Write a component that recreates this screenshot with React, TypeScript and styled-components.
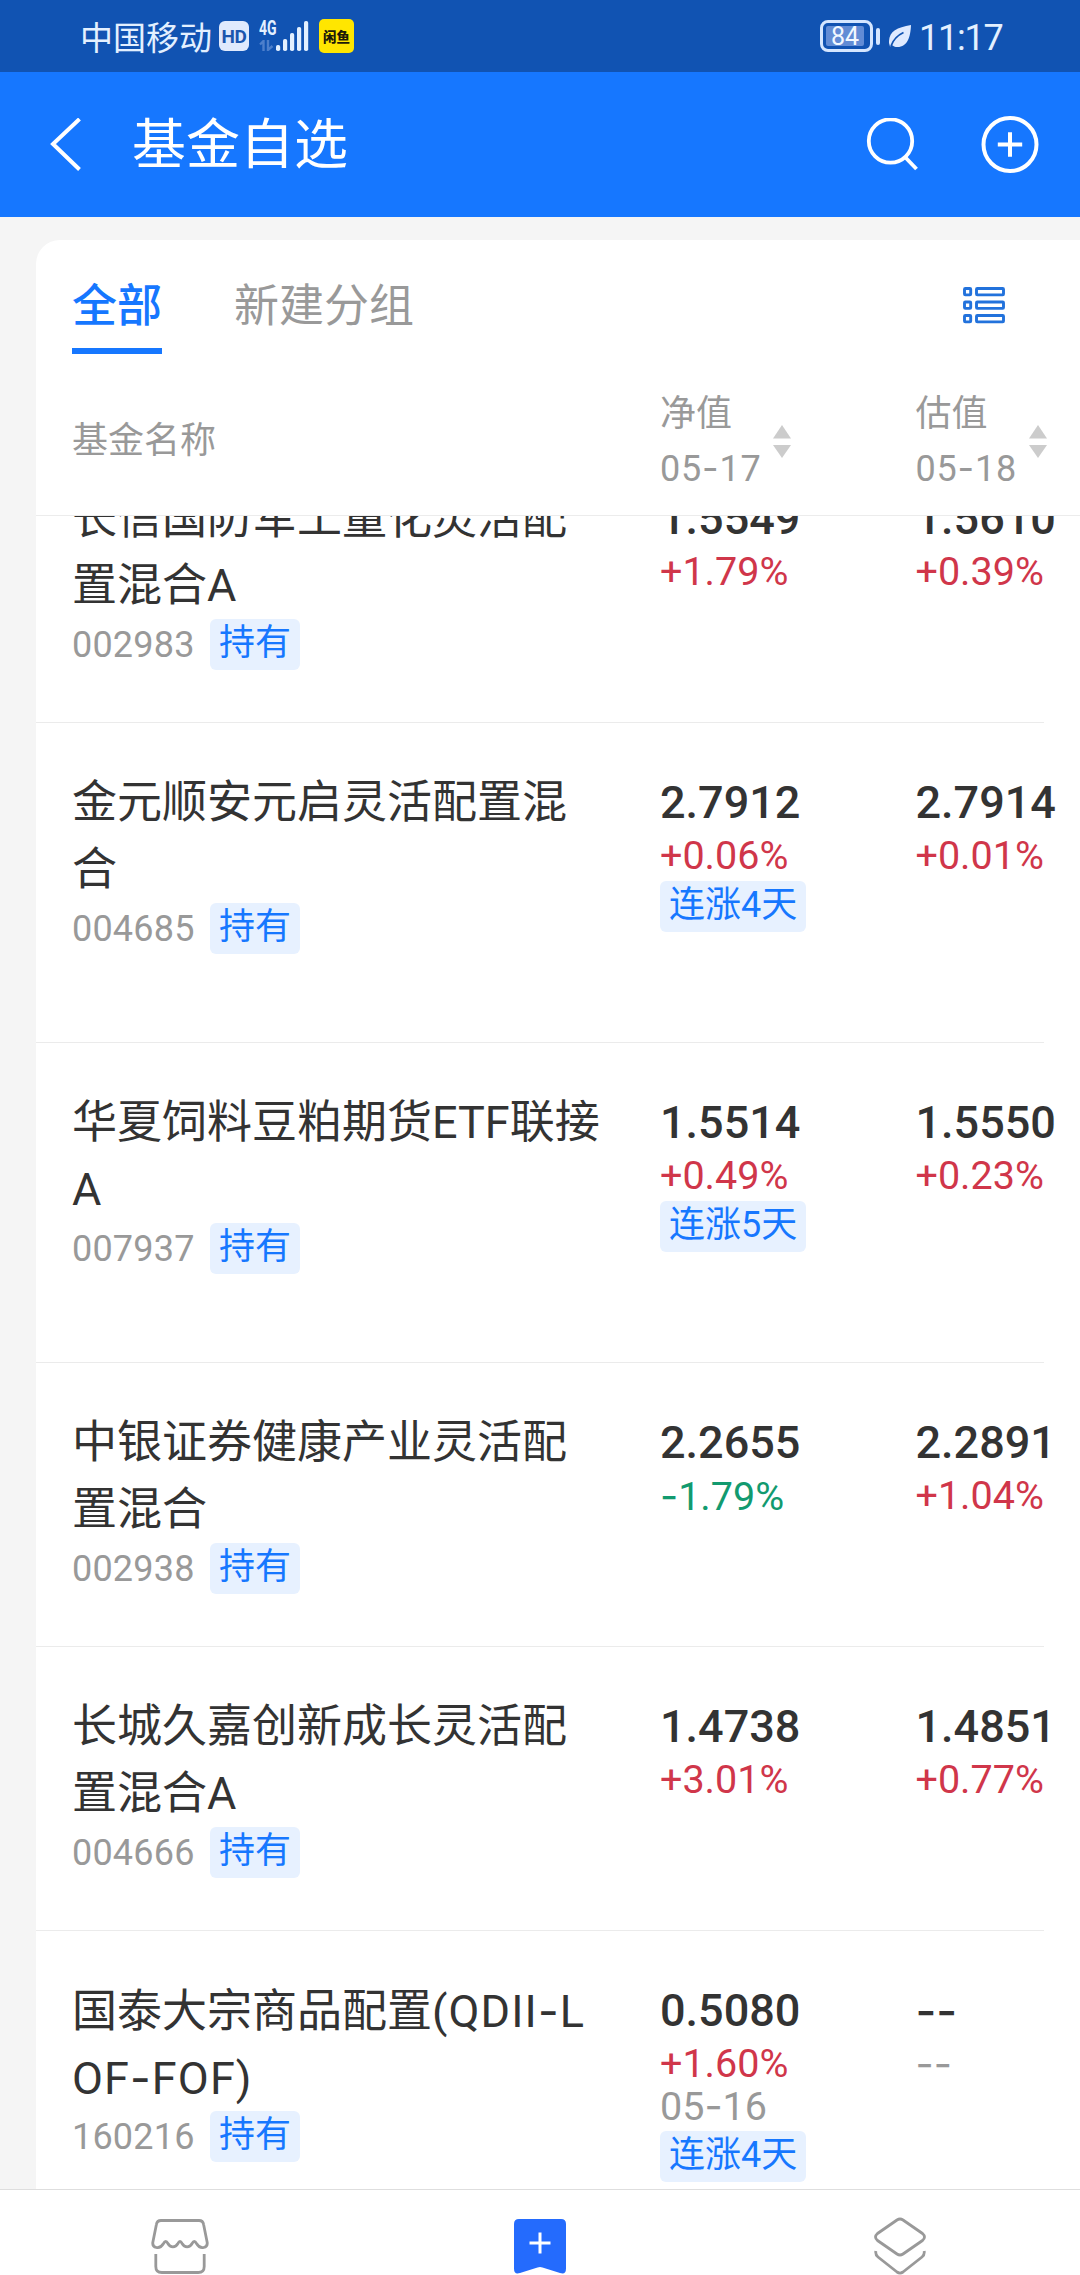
import React from "react";
import styled, { createGlobalStyle, css } from "styled-components";

const latin = `Roboto, "Noto Sans CJK SC", sans-serif`;
const cjk = `"Noto Sans CJK SC", sans-serif`;

const Global = createGlobalStyle`
  * { box-sizing: border-box; }
  body { margin: 0; background: #f5f5f5; font-family: ${latin}; color: #333; }
`;

const Screen = styled.div`
  width: 1080px;
  height: 2275px;
  display: flex;
  flex-direction: column;
  overflow: hidden;
  background: #f5f5f5;
`;

/* ---------- system status bar ---------- */

const StatusBar = styled.div`
  height: 72px;
  flex: none;
  display: flex;
  align-items: center;
  padding: 0 78px 0 80px;
  background: #1153b2;
  color: #e3f0ff;
`;

const Carrier = styled.span`
  font: 400 33px/36px ${cjk};
  width: 139px;
`;

const HdBadge = styled.span`
  width: 30px;
  height: 30px;
  border-radius: 6px;
  background: #e0eafd;
  color: #1b56ae;
  font: 700 19px/31px Roboto, sans-serif;
  letter-spacing: -0.5px;
  text-align: center;
  margin-right: 10px;
`;

const Network = styled.div`
  display: flex;
  align-items: flex-end;
  height: 30px;
  width: 60px;
`;

const NetworkType = styled.div`
  width: 17px;
  height: 30px;
  display: flex;
  flex-direction: column;
  justify-content: space-between;
  font: 700 20px/14px Roboto, sans-serif;
`;

const NetworkLabel = styled.span`
  display: block;
  transform: scaleX(0.7);
  transform-origin: left;
`;

const AppBadge = styled.span`
  width: 35px;
  height: 34px;
  border-radius: 5px;
  background: #ffe600;
  color: #1c1a08;
  font: 900 13.5px/34px ${cjk};
  text-align: center;
`;

const Spacer = styled.div`
  flex: 1;
`;

const Battery = styled.div`
  width: 53px;
  height: 32px;
  border: 3px solid #d5e6ff;
  border-radius: 8px;
  padding: 3px;
`;

const BatteryLevel = styled.div`
  width: 38px;
  height: 20px;
  border-radius: 2px;
  background: #628cd5;
  color: #f2f8ff;
  font: 400 25px/21px Roboto, sans-serif;
  text-align: center;
`;

const BatteryTip = styled.div`
  width: 4px;
  height: 17px;
  border-radius: 2px;
  background: #d5e6ff;
  margin: 0 9px 0 3px;
`;

const Clock = styled.span`
  font: 400 36px/40px Roboto, sans-serif;
  letter-spacing: -1.2px;
  width: 83px;
  margin-left: 8px;
  padding-top: 4px;
  white-space: nowrap;
`;

/* ---------- title bar ---------- */

const TitleBar = styled.header`
  height: 145px;
  flex: none;
  display: flex;
  align-items: center;
  padding: 0 41px 0 49px;
  background: #1677ff;
`;

const Title = styled.h1`
  margin: 0 0 7px 49px;
  flex: 1;
  color: #fff;
  font: 400 54px/60px ${cjk};
`;

const IconButton = styled.button`
  border: 0;
  padding: 0;
  background: none;
  display: flex;
  margin-left: ${(p: { $gap?: number }) => p.$gap ?? 0}px;
`;

/* ---------- card ---------- */

const Card = styled.main`
  flex: 1;
  min-height: 0;
  margin: 23px 0 0 36px;
  border-top-left-radius: 24px;
  background: #fff;
  display: flex;
  flex-direction: column;
`;

const Tabs = styled.nav`
  height: 114px;
  flex: none;
  display: flex;
  align-items: flex-end;
  padding: 0 75px 0 36px;
  gap: 72px;
`;

const Tab = styled.span<{ $active?: boolean }>`
  font: ${(p) => (p.$active ? 500 : 400)} 45px/57px ${cjk};
  color: ${(p) => (p.$active ? "#1677ff" : "#999")};
  height: 80px;
  border-bottom: 6px solid ${(p) => (p.$active ? "#1677ff" : "transparent")};
`;

const ListToggle = styled(IconButton)`
  margin: 0 0 30px auto;
`;

const columns = css`
  display: grid;
  grid-template-columns: 588px 255.5px 1fr;
  padding-left: 36px;
`;

const TableHead = styled.div`
  ${columns}
  flex: none;
  height: 162px;
  align-items: center;
  border-bottom: 1px solid #ececec;
  color: #999;
  font: 400 36px/52px ${latin};
  padding-top: 13px;
`;

const HeadCell = styled.div`
  display: flex;
  align-items: center;
`;

const HeadText = styled.div`
  width: 113px;
  white-space: nowrap;
`;

const HeadDate = styled.div`
  letter-spacing: 0.8px;
  padding-top: 2px;
`;

const List = styled.section`
  flex: 1;
  min-height: 0;
  overflow: hidden;
`;

const Rows = styled.div`
  margin-top: -77px;
`;

const Row = styled.article<{ $tall: boolean }>`
  ${columns}
  height: ${(p) => (p.$tall ? 320 : 284)}px;
  padding-top: 44px;
  width: 1008px;
  border-bottom: 1px solid #ebebeb;
`;

const Name = styled.div`
  font: 400 45px/67px ${latin};
  height: 67px;
  padding-top: 2px;
  white-space: nowrap;
  color: #333;
`;

const Tracked = styled.span`
  letter-spacing: 1.1px;
`;

const CodeLine = styled.div`
  display: flex;
  align-items: center;
  padding-top: 1px;
`;

const Code = styled.span`
  font: 400 36px/51px Roboto, sans-serif;
  letter-spacing: 0.2px;
  color: #999;
  width: 138px;
  padding-top: 2px;
`;

const Tag = styled.span`
  display: inline-block;
  height: 51px;
  padding: 0 9px;
  border-radius: 6px;
  background: #e7f1ff;
  color: #1677ff;
  font: 400 36px/49px ${latin};
  white-space: nowrap;
`;

const Quote = styled.div`
  display: flex;
  flex-direction: column;
  align-items: flex-start;
  white-space: nowrap;
`;

const Value = styled.div`
  font: 500 45px/67px Roboto, sans-serif;
  height: 68px;
  padding-top: 2px;
  color: #333;
`;

const tones = { up: "#d0364a", down: "#129a6f", flat: "#999" };

const Change = styled.div<{ $tone: keyof typeof tones }>`
  font: 400 39.5px/42px Roboto, sans-serif;
  height: 42px;
  color: ${(p) => tones[p.$tone]};
`;

const Streak = styled(Tag)`
  margin-top: 4px;
`;

const Dash = styled.span`
  font-family: Inter, sans-serif;
`;

/* ---------- bottom bar ---------- */

const BottomBar = styled.footer`
  height: 86px;
  flex: none;
  display: grid;
  grid-template-columns: repeat(3, 1fr);
  justify-items: center;
  align-items: start;
  padding-top: 26px;
  border-top: 1px solid #dedede;
  background: #fff;
`;

/* Hyphens use a wider glyph than the digits' own font provides. */
const Dashed = ({ text }: { text: string }) => (
  <>
    {text.split(/(-)/).map((part, i) => (part === "-" ? <Dash key={i}>-</Dash> : part))}
  </>
);

/* Long Latin abbreviations inside a fund name are set slightly looser. */
const FundName = ({ text }: { text: string }) => (
  <Name>
    {text.split(/(\(?[A-Z-]{4,}\)?)/).map((part, i) =>
      i % 2 ? <Tracked key={i}><Dashed text={part} /></Tracked> : part
    )}
  </Name>
);

const SortArrows = () => (
  <svg width="18" height="33" viewBox="0 0 18 33" fill="#ccc">
    <path d="M9 0L18 13.5H0z" />
    <path d="M0 20h18L9 33z" />
  </svg>
);

type QuoteData = { value: string; change: string; date?: string; streak?: string };
type Fund = { name: string[]; code: string; net: QuoteData; est: QuoteData; tall?: boolean };

const funds: Fund[] = [
  { name: ["长信国防军工量化灵活配", "置混合A"], code: "002983", net: { value: "1.5549", change: "+1.79%" }, est: { value: "1.5610", change: "+0.39%" } },
  { name: ["金元顺安元启灵活配置混", "合"], code: "004685", net: { value: "2.7912", change: "+0.06%", streak: "连涨4天" }, est: { value: "2.7914", change: "+0.01%" }, tall: true },
  { name: ["华夏饲料豆粕期货ETF联接", "A"], code: "007937", net: { value: "1.5514", change: "+0.49%", streak: "连涨5天" }, est: { value: "1.5550", change: "+0.23%" }, tall: true },
  { name: ["中银证券健康产业灵活配", "置混合"], code: "002938", net: { value: "2.2655", change: "-1.79%" }, est: { value: "2.2891", change: "+1.04%" } },
  { name: ["长城久嘉创新成长灵活配", "置混合A"], code: "004666", net: { value: "1.4738", change: "+3.01%" }, est: { value: "1.4851", change: "+0.77%" } },
  { name: ["国泰大宗商品配置(QDII-L", "OF-FOF)"], code: "160216", net: { value: "0.5080", change: "+1.60%", date: "05-16", streak: "连涨4天" }, est: { value: "--", change: "--" }, tall: true },
];

const toneOf = (change: string): keyof typeof tones =>
  change.startsWith("+") ? "up" : change === "--" ? "flat" : "down";

const QuoteCell = ({ value, change, date, streak }: QuoteData) => (
  <Quote>
    <Value><Dashed text={value} /></Value>
    <Change $tone={toneOf(change)}><Dashed text={change} /></Change>
    {date && <Change $tone="flat"><Dashed text={date} /></Change>}
    {streak && <Streak>{streak}</Streak>}
  </Quote>
);

const SortableHead = ({ label, date }: { label: string; date: string }) => (
  <HeadCell>
    <HeadText>
      {label}
      <HeadDate><Dashed text={date} /></HeadDate>
    </HeadText>
    <SortArrows />
  </HeadCell>
);

export default function App() {
  return (
    <Screen>
      <Global />
      <StatusBar>
        <Carrier>中国移动</Carrier>
        <HdBadge>HD</HdBadge>
        <Network>
          <NetworkType>
            <NetworkLabel>4G</NetworkLabel>
            <svg width="15" height="11" viewBox="0 0 15 11" fill="none" stroke="#4d7fcb" strokeWidth="2.4">
              <path d="M1 4.5L4.5 1v10M9 0v10l4.500-4" />
            </svg>
          </NetworkType>
          <svg width="33" height="30" viewBox="0 0 33 30" fill="#e3f0ff">
            <rect x="0" y="24" width="4.200" height="6" rx="1.800" />
            <rect x="7" y="18" width="4.200" height="12" rx="1.800" />
            <rect x="14" y="12" width="4.200" height="18" rx="1.800" />
            <rect x="21" y="6" width="4.200" height="24" rx="1.800" />
            <rect x="28" y="0" width="4.200" height="30" rx="1.800" />
          </svg>
        </Network>
        <AppBadge>闲鱼</AppBadge>
        <Spacer />
        <Battery><BatteryLevel>84</BatteryLevel></Battery>
        <BatteryTip />
        <svg width="22" height="22" viewBox="0 0 22 22">
          <path d="M22 0C21.500 12 18.500 22 8.500 22 6 22 4 21 3.200 20.200L1 21.500 0 18C-.5 7 7 2.500 22 0z" fill="#dfeaff" />
          <path d="M2 21C4 15.500 8 10.500 14.500 7.500" fill="none" stroke="#1153b2" strokeWidth="1.800" />
        </svg>
        <Clock>11:17</Clock>
      </StatusBar>

      <TitleBar>
        <IconButton aria-label="back">
          <svg width="34" height="54" viewBox="0 0 34 54" fill="none" stroke="#fff" strokeWidth="4">
            <path d="M30.500 1L4 26l26.500 25.500" />
          </svg>
        </IconButton>
        <Title>基金自选</Title>
        <IconButton aria-label="search">
          <svg width="52" height="54" viewBox="0 0 52 54" fill="none" stroke="#fff" strokeWidth="3.800">
            <circle cx="24.500" cy="23" r="21.700" />
            <path d="M39 39l11.500 12" />
          </svg>
        </IconButton>
        <IconButton aria-label="add" $gap={63}>
          <svg width="58" height="58" viewBox="0 0 58 58" fill="none" stroke="#fff" strokeWidth="4">
            <circle cx="29" cy="28.500" r="26.500" />
            <path d="M29 16.300v24.400M16.800 28.500h24.400" />
          </svg>
        </IconButton>
      </TitleBar>

      <Card>
        <Tabs>
          <Tab $active>全部</Tab>
          <Tab>新建分组</Tab>
          <ListToggle aria-label="list view">
            <svg width="42" height="37" viewBox="0 0 42 37" fill="none" stroke="#2272dc" strokeWidth="2.900">
              {[1.5, 15, 28.5].map((y) => (
                <g key={y}>
                  <rect x="1.500" y={y} width="6.200" height="6.400" rx="0.800" />
                  <rect x="13.500" y={y} width="27" height="6.400" rx="0.800" />
                </g>
              ))}
            </svg>
          </ListToggle>
        </Tabs>

        <TableHead>
          <HeadCell>基金名称</HeadCell>
          <SortableHead label="净值" date="05-17" />
          <SortableHead label="估值" date="05-18" />
        </TableHead>

        <List>
          <Rows>
            {funds.map((f) => (
              <Row key={f.code} $tall={!!f.tall}>
                <div>
                  {f.name.map((line) => (
                    <FundName key={line} text={line} />
                  ))}
                  <CodeLine>
                    <Code>{f.code}</Code>
                    <Tag>持有</Tag>
                  </CodeLine>
                </div>
                <QuoteCell {...f.net} />
                <QuoteCell {...f.est} />
              </Row>
            ))}
          </Rows>
        </List>
      </Card>

      <BottomBar>
        <svg width="58" height="60" viewBox="0 0 58 60" fill="none" stroke="#999" strokeWidth="2.800" strokeLinejoin="round">
          <path d="M10 4.500h38q4 0 4.600 4l3.600 18c.6 5-6.500 8-10.700 1q-2.200-4-4.400 0c-2.500 4.500-7.500 4.500-10 0q-2.100-4-4.200 0c-2.500 4.500-7.500 4.500-10 0q-2.200-4-4.400 0c-4.200 7-11.300 4-10.700-1l3.600-18q.6-4 4.600-4z" />
          <path d="M4.800 38v12.500q0 6 6 6h36.400q6 0 6-6V38" />
        </svg>
        <svg width="52" height="60" viewBox="0 0 52 60">
          <path d="M5 3h42q5 0 5 5v44.500q0 6.500-6 4.500L28.500 51.500q-2.500-1-5 0L6 57q-6 2-6-4.500V8q0-5 5-5z" fill="#246bfd" />
          <path d="M26 16.500v21M15.500 27h21" stroke="#fff" strokeWidth="3" />
        </svg>
        <svg width="52" height="60" viewBox="0 0 52 60" fill="none" stroke="#999" strokeWidth="2.800" strokeLinejoin="round">
          <path d="M23 4q3-2 6 0L48.500 17.500q4 3.500 0 7L29 38q-3 2-6 0L3.500 24.500q-4-3.500 0-7z" />
          <path d="M1.800 35q-.5 4 2.200 6L23 56q3 2.200 6 0l19-15q2.700-2 2.200-6" />
        </svg>
      </BottomBar>
    </Screen>
  );
}
